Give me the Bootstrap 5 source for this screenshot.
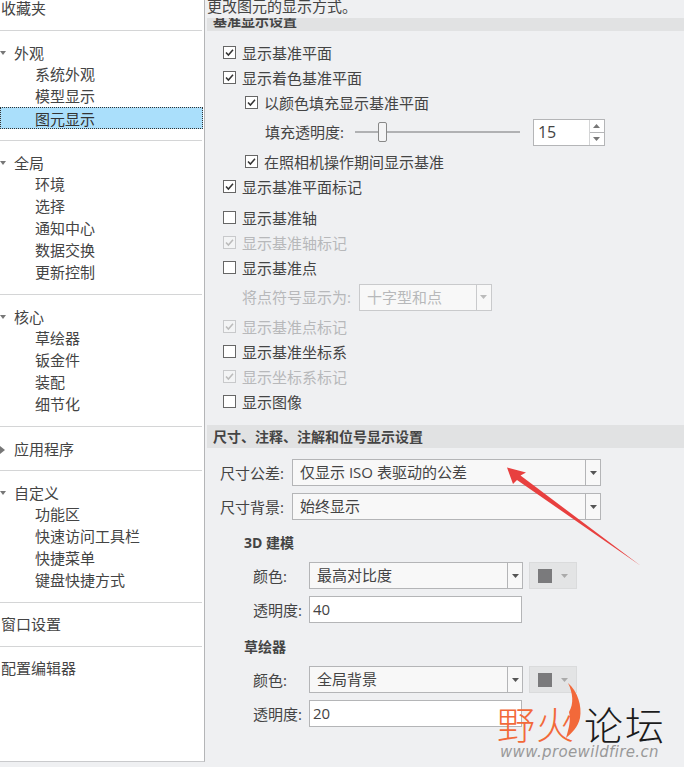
<!DOCTYPE html>
<html lang="zh">
<head>
<meta charset="utf-8">
<title>图元显示</title>
<link href="https://cdn.jsdelivr.net/npm/bootstrap@5.3.0/dist/css/bootstrap.min.css" rel="stylesheet">
<style>
html,body{height:767px;overflow:hidden}
body{background:#eff0f2;color:#444;font:15px/22px "Open Sans","Noto Sans CJK SC",sans-serif}
.stage{height:767px;position:relative;overflow:hidden}
.side{width:205px;height:762px;flex:none;background:#fff;border-right:1px solid #b4b5b7;border-bottom:1px solid #c9cacc;overflow:hidden}
.sgroup{padding:11px 0 10px;border-bottom:1px solid #d4d5d6;margin-right:-1px;width:202px}
.sgroup:first-child{margin-top:-13px}
.srow{height:22px;line-height:20px;padding-left:35px;white-space:nowrap}
.srow.top{padding-left:14px;position:relative;line-height:22px}
.srow.flat{padding-left:1px}
.srow.sel{background:#aadffb;outline:1px dotted #333;outline-offset:-1px;width:203px;color:#333;margin-top:-1px;height:22px;line-height:24px;margin-bottom:1px}
.twist{position:absolute;left:0;top:8px}
.pane{flex:1;min-width:0;padding-left:2px}
.intro{height:18px;line-height:12px;white-space:nowrap;overflow:hidden}
.band{background:#e1e2e3;font-weight:700;font-size:14px;color:#444;padding-left:6px;height:23px;line-height:23px}
.band.cut{height:13px;line-height:5px;overflow:hidden}
.opt{height:25px;padding-left:16px;gap:6px;white-space:nowrap}
.opt.sub{padding-left:38px}
.opt.tall{height:34px}
.opt.lead-in{padding-left:58px;gap:0}
.opt.indent{padding-left:35px;gap:0}
.opt.gapt{margin-top:6px}
.opt.off{color:#b7b8ba}
.opt .form-check-input{width:13px;height:13px;margin:0;flex:none;border:1px solid #666;border-radius:0;background-color:#fff;box-shadow:none;opacity:1}
.opt .form-check-input:checked{background-color:#fff;border-color:#666;background-size:11px;background-image:url("data:image/svg+xml,%3Csvg xmlns='http://www.w3.org/2000/svg' viewBox='0 0 11 11'%3E%3Cpath d='M2 5.500l2.400 2.600L9 2.800' fill='none' stroke='%23333' stroke-width='1.500'/%3E%3C/svg%3E")}
.opt .form-check-input:disabled{border-color:#c8c9cb;background-color:#f3f4f5}
.opt .form-check-input:disabled:checked{background-image:url("data:image/svg+xml,%3Csvg xmlns='http://www.w3.org/2000/svg' viewBox='0 0 11 11'%3E%3Cpath d='M2 5.500l2.400 2.600L9 2.800' fill='none' stroke='%23bbb' stroke-width='1.500'/%3E%3C/svg%3E")}
.slide{width:165px;height:2px;background:#b0b1b3;margin-left:11px;position:relative;flex:none}
.knob{position:absolute;left:23px;top:-9px;width:9px;height:20px;background:#f4f4f5;border:1px solid #888;border-radius:2px}
.spin{width:72px;height:27px;margin-left:13px;background:#fff;border:1px solid #b4b5b7;flex:none;line-height:25px}
.spin span.val{flex:1;padding-left:4px;font-size:16px}
.spin .btns{width:15px;border-left:1px solid #d4d5d6;font-size:0}
.spin .btns i{flex:1;display:flex;align-items:center;justify-content:center}
.spin .btns i+i{border-top:1px solid #b4b5b7}
.combo{height:27px;background:#f8f8f8;border:1px solid #b4b5b7;flex:none;padding-left:7px;line-height:25px;position:relative}
.combo .drop{position:absolute;right:0;top:0;bottom:0;width:15px;border-left:1px solid #b4b5b7;display:flex;align-items:center;justify-content:center}
.combo.off{border-color:#c9cacc;color:#b7b8ba;width:133px;margin-left:8px}
.combo.off .drop{border-left-color:#c9cacc}
.w309{width:309px}
.w214{width:214px}
.frow{height:27px}
.lab1{width:85px;padding-left:13px;white-space:nowrap;flex:none}
.lab2{width:102px;padding-left:46px;white-space:nowrap;flex:none}
.tbox{width:213px;height:27px;border:1px solid #b4b5b7;background:#fff;padding-left:3px;line-height:25px}
.swatch{width:48px;height:27px;margin-left:6px;background:#e3e4e5;border:1px solid #dadbdc;gap:9px;flex:none;justify-content:center}
.swatch b{width:14px;height:14px;background:#7a7a7c;display:block}
.subhead{font-weight:700;font-size:14px;padding-left:37px;height:22px;color:#444}
.mt8{margin-top:8px}.mt7{margin-top:7px}.mt11{margin-top:11px}.mt13{margin-top:13px}.mt9{margin-top:9px}.mt12{margin-top:12px}
.overlay{position:absolute;left:0;top:0;pointer-events:none}
.wm{position:absolute;white-space:nowrap;font-weight:300}
.wm.a{left:497px;top:701px;font-size:38px;line-height:44px;color:#f2693a;letter-spacing:1px;font-family:"Noto Sans CJK SC",sans-serif}
.wm.b{left:584px;top:701px;font-size:39px;line-height:44px;color:#1b1b1b;letter-spacing:2px;font-family:"Noto Sans CJK SC",sans-serif}
.wm.c{left:500px;top:743px;font:italic 15px/18px "DejaVu Sans",sans-serif;color:#999;letter-spacing:.35px}
</style>
</head>
<body>
<div class="stage d-flex">
  <nav class="side">
    <div class="sgroup"><div class="srow flat">收藏夹</div></div>
    <div class="sgroup">
      <div class="srow top"><svg class="twist" width="6" height="6"><path d="M0 1h6L3 5z" fill="#777"/></svg>外观</div>
      <div class="srow">系统外观</div>
      <div class="srow">模型显示</div>
      <div class="srow sel">图元显示</div>
    </div>
    <div class="sgroup">
      <div class="srow top"><svg class="twist" width="6" height="6"><path d="M0 1h6L3 5z" fill="#777"/></svg>全局</div>
      <div class="srow">环境</div>
      <div class="srow">选择</div>
      <div class="srow">通知中心</div>
      <div class="srow">数据交换</div>
      <div class="srow">更新控制</div>
    </div>
    <div class="sgroup">
      <div class="srow top"><svg class="twist" width="6" height="6"><path d="M0 1h6L3 5z" fill="#777"/></svg>核心</div>
      <div class="srow">草绘器</div>
      <div class="srow">钣金件</div>
      <div class="srow">装配</div>
      <div class="srow">细节化</div>
    </div>
    <div class="sgroup">
      <div class="srow top"><svg class="twist" width="6" height="8"><path d="M0 0l5 4-5 4z" fill="#777"/></svg>应用程序</div>
    </div>
    <div class="sgroup">
      <div class="srow top"><svg class="twist" width="6" height="6"><path d="M0 1h6L3 5z" fill="#777"/></svg>自定义</div>
      <div class="srow">功能区</div>
      <div class="srow">快速访问工具栏</div>
      <div class="srow">快捷菜单</div>
      <div class="srow">键盘快捷方式</div>
    </div>
    <div class="sgroup"><div class="srow flat">窗口设置</div></div>
    <div class="sgroup border-0"><div class="srow flat">配置编辑器</div></div>
  </nav>
  <main class="pane">
    <div class="intro">更改图元的显示方式。</div>
    <div class="band cut">基准显示设置</div>
    <div class="mt9"></div>
    <div class="opt d-flex align-items-center"><input class="form-check-input" type="checkbox" checked><span>显示基准平面</span></div>
    <div class="opt d-flex align-items-center"><input class="form-check-input" type="checkbox" checked><span>显示着色基准平面</span></div>
    <div class="opt sub d-flex align-items-center"><input class="form-check-input" type="checkbox" checked><span>以颜色填充显示基准平面</span></div>
    <div class="opt tall lead-in d-flex align-items-center">
      <span>填充透明度:</span>
      <div class="slide"><div class="knob"></div></div>
      <div class="spin d-flex">
        <span class="val">15</span>
        <div class="btns d-flex flex-column">
          <i><svg width="7" height="4"><path d="M0 4h7L3.5 0z" fill="#777"/></svg></i>
          <i><svg width="7" height="4"><path d="M0 0h7L3.5 4z" fill="#777"/></svg></i>
        </div>
      </div>
    </div>
    <div class="opt sub d-flex align-items-center"><input class="form-check-input" type="checkbox" checked><span>在照相机操作期间显示基准</span></div>
    <div class="opt d-flex align-items-center"><input class="form-check-input" type="checkbox" checked><span>显示基准平面标记</span></div>
    <div class="opt gapt d-flex align-items-center"><input class="form-check-input" type="checkbox"><span>显示基准轴</span></div>
    <div class="opt off d-flex align-items-center"><input class="form-check-input" type="checkbox" checked disabled><span>显示基准轴标记</span></div>
    <div class="opt d-flex align-items-center"><input class="form-check-input" type="checkbox"><span>显示基准点</span></div>
    <div class="opt tall indent off d-flex align-items-center">
      <span>将点符号显示为:</span>
      <div class="combo off">十字型和点<span class="drop"><svg width="7" height="4"><path d="M0 0h7L3.5 4z" fill="#bbb"/></svg></span></div>
    </div>
    <div class="opt off d-flex align-items-center"><input class="form-check-input" type="checkbox" checked disabled><span>显示基准点标记</span></div>
    <div class="opt d-flex align-items-center"><input class="form-check-input" type="checkbox"><span>显示基准坐标系</span></div>
    <div class="opt off d-flex align-items-center"><input class="form-check-input" type="checkbox" checked disabled><span>显示坐标系标记</span></div>
    <div class="opt d-flex align-items-center"><input class="form-check-input" type="checkbox"><span>显示图像</span></div>
    <div class="band mt11">尺寸、注释、注解和位号显示设置</div>
    <div class="frow mt11 d-flex align-items-center"><span class="lab1">尺寸公差:</span>
      <div class="combo w309">仅显示 ISO 表驱动的公差<span class="drop"><svg width="7" height="4"><path d="M0 0h7L3.5 4z" fill="#555"/></svg></span></div></div>
    <div class="frow mt7 d-flex align-items-center"><span class="lab1">尺寸背景:</span>
      <div class="combo w309">始终显示<span class="drop"><svg width="7" height="4"><path d="M0 0h7L3.5 4z" fill="#555"/></svg></span></div></div>
    <div class="subhead mt12">3D 建模</div>
    <div class="frow mt8 d-flex align-items-center"><span class="lab2">颜色:</span>
      <div class="combo w214">最高对比度<span class="drop"><svg width="7" height="4"><path d="M0 0h7L3.5 4z" fill="#555"/></svg></span></div>
      <div class="swatch d-flex align-items-center"><b></b><svg width="7" height="4"><path d="M0 0h7L3.5 4z" fill="#aaa"/></svg></div></div>
    <div class="frow mt7 d-flex align-items-center"><span class="lab2">透明度:</span><div class="tbox">40</div></div>
    <div class="subhead mt13">草绘器</div>
    <div class="frow mt8 d-flex align-items-center"><span class="lab2">颜色:</span>
      <div class="combo w214">全局背景<span class="drop"><svg width="7" height="4"><path d="M0 0h7L3.5 4z" fill="#555"/></svg></span></div>
      <div class="swatch d-flex align-items-center"><b></b><svg width="7" height="4"><path d="M0 0h7L3.5 4z" fill="#aaa"/></svg></div></div>
    <div class="frow mt7 d-flex align-items-center"><span class="lab2">透明度:</span><div class="tbox">20</div></div>
  </main>
  <svg class="overlay" width="684" height="767" viewBox="0 0 684 767">
    <path d="M507 467.500L526 472.500L520.500 475.500L641 566L517 480L513 484Z" fill="#e8403f"/>
    <path d="M568 683C578 692 582 706 580 718C578 727 572 733 566 738C569 728 571 720 569 712C574 704 573 693 568 683Z" fill="#f2693a"/>
  </svg>
  <span class="wm a">野火</span>
  <span class="wm b">论坛</span>
  <span class="wm c">www.proewildfire.cn</span>
</div>
</body>
</html>
